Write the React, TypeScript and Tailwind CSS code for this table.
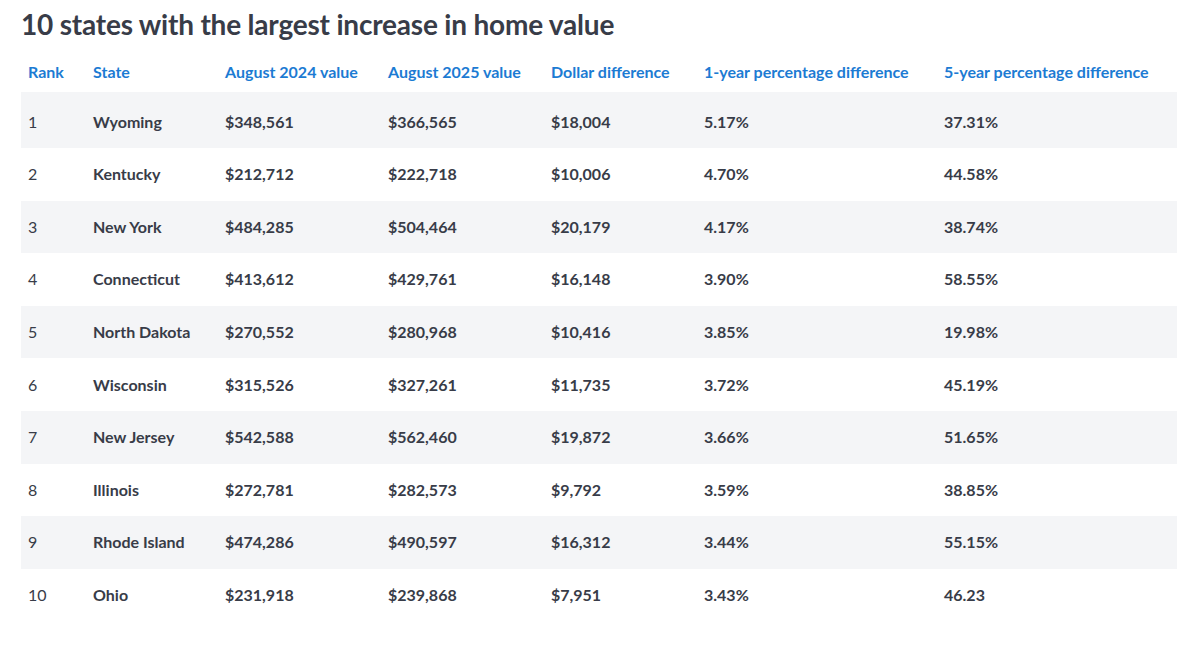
const rows = [
  ["1", "Wyoming", "$348,561", "$366,565", "$18,004", "5.17%", "37.31%"],
  ["2", "Kentucky", "$212,712", "$222,718", "$10,006", "4.70%", "44.58%"],
  ["3", "New York", "$484,285", "$504,464", "$20,179", "4.17%", "38.74%"],
  ["4", "Connecticut", "$413,612", "$429,761", "$16,148", "3.90%", "58.55%"],
  ["5", "North Dakota", "$270,552", "$280,968", "$10,416", "3.85%", "19.98%"],
  ["6", "Wisconsin", "$315,526", "$327,261", "$11,735", "3.72%", "45.19%"],
  ["7", "New Jersey", "$542,588", "$562,460", "$19,872", "3.66%", "51.65%"],
  ["8", "Illinois", "$272,781", "$282,573", "$9,792", "3.59%", "38.85%"],
  ["9", "Rhode Island", "$474,286", "$490,597", "$16,312", "3.44%", "55.15%"],
  ["10", "Ohio", "$231,918", "$239,868", "$7,951", "3.43%", "46.23"],
];

const headers = [
  "Rank",
  "State",
  "August 2024 value",
  "August 2025 value",
  "Dollar difference",
  "1-year percentage difference",
  "5-year percentage difference",
];

const widths = ["w-[65px]", "w-[132px]", "w-[163px]", "w-[163px]", "w-[153px]", "w-[240px]", "w-[240px]"];

export default function App() {
  return (
    <div className="min-h-screen bg-white px-[21px] pt-[6px] text-[#383c48] font-['Lato','Liberation_Sans',sans-serif]">
      <h2 className="text-[28px] font-bold leading-[36px] tracking-[-0.2px]">
        10 states with the largest increase in home value
      </h2>
      <table className="mt-[12px] w-[1156px] table-fixed border-collapse">
        <colgroup>
          {widths.map((w, i) => (
            <col key={i} className={w} />
          ))}
        </colgroup>
        <thead>
          <tr className="h-[38px]">
            {headers.map((h) => (
              <th key={h} className="px-[7px] pb-[2px] text-left align-middle text-[16px] font-bold text-[#1c7bd3]">
                {h}
              </th>
            ))}
          </tr>
        </thead>
        <tbody>
          {rows.map((r, i) => (
            <tr key={r[0]} className={(i % 2 === 0 ? "bg-[#f4f5f7] " : "") + (i === 0 ? "h-[56px]" : "h-[52.6px]")}>
              {r.map((c, j) => (
                <td
                  key={j}
                  className={
                    "px-[7px] align-middle text-[16px] " +
                    (j === 0 ? "font-normal " : "font-bold ") +
                    (i === 0 ? "pt-[3px]" : "pt-0")
                  }
                >
                  {c}
                </td>
              ))}
            </tr>
          ))}
        </tbody>
      </table>
    </div>
  );
}
